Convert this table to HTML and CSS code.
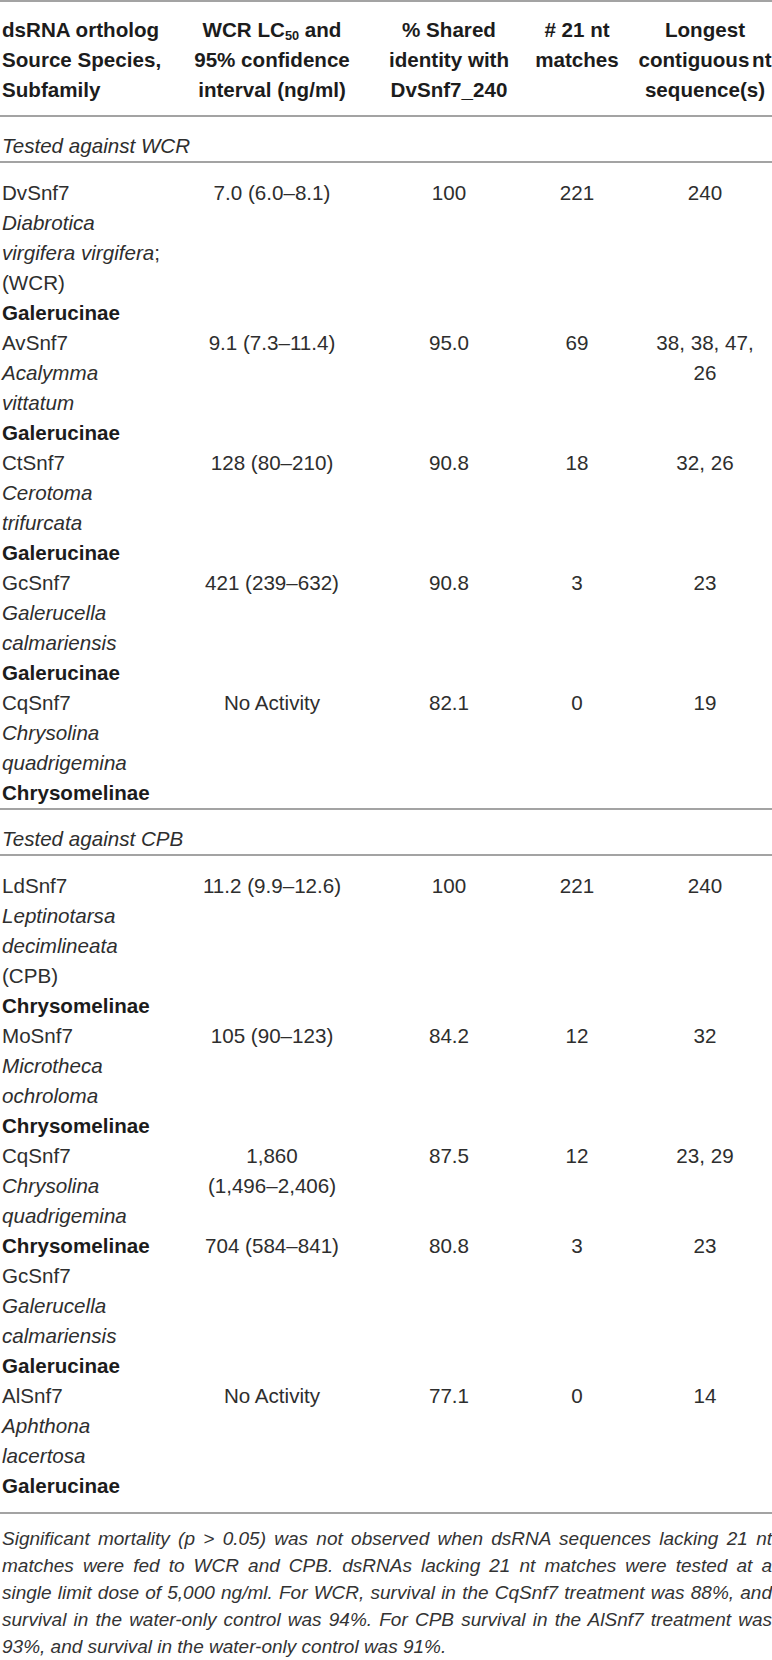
FILE: index.html
```html
<!DOCTYPE html>
<html lang="en">
<head>
<meta charset="utf-8">
<title>dsRNA orthologs</title>
<link rel="stylesheet" href="styles.css">
</head>
<body>
<table class="orthologs">
  <colgroup>
    <col class="c-src"><col class="c-lc"><col class="c-id"><col class="c-match"><col class="c-long">
  </colgroup>
  <thead>
    <tr>
      <th class="src">dsRNA ortholog<br>Source Species,<br>Subfamily</th>
      <th>WCR LC<sub>50</sub> and<br>95% confidence<br>interval (ng/ml)</th>
      <th>% Shared<br>identity with<br>DvSnf7_240</th>
      <th># 21 nt<br>matches</th>
      <th class="nowrap">Longest<br><span class="tight">contiguous nt</span><br>sequence(s)</th>
    </tr>
  </thead>
  <tbody class="group">
    <tr class="label"><td colspan="5">Tested against WCR</td></tr>
    <tr class="first">
      <td class="src"><span class="ln">DvSnf7</span><span class="ln sp">Diabrotica</span><span class="ln"><i>virgifera virgifera</i>;</span><span class="ln">(WCR)</span><span class="ln fam">Galerucinae</span></td>
      <td>7.0 (6.0–8.1)</td><td>100</td><td>221</td><td>240</td>
    </tr>
    <tr>
      <td class="src"><span class="ln">AvSnf7</span><span class="ln sp">Acalymma</span><span class="ln sp">vittatum</span><span class="ln fam">Galerucinae</span></td>
      <td>9.1 (7.3–11.4)</td><td>95.0</td><td>69</td><td>38, 38, 47,<br>26</td>
    </tr>
    <tr>
      <td class="src"><span class="ln">CtSnf7</span><span class="ln sp">Cerotoma</span><span class="ln sp">trifurcata</span><span class="ln fam">Galerucinae</span></td>
      <td>128 (80–210)</td><td>90.8</td><td>18</td><td>32, 26</td>
    </tr>
    <tr>
      <td class="src"><span class="ln">GcSnf7</span><span class="ln sp">Galerucella</span><span class="ln sp">calmariensis</span><span class="ln fam">Galerucinae</span></td>
      <td>421 (239–632)</td><td>90.8</td><td>3</td><td>23</td>
    </tr>
    <tr class="last">
      <td class="src"><span class="ln">CqSnf7</span><span class="ln sp">Chrysolina</span><span class="ln sp">quadrigemina</span><span class="ln fam">Chrysomelinae</span></td>
      <td>No Activity</td><td>82.1</td><td>0</td><td>19</td>
    </tr>
  </tbody>
  <tbody class="group final">
    <tr class="label"><td colspan="5">Tested against CPB</td></tr>
    <tr class="first">
      <td class="src"><span class="ln">LdSnf7</span><span class="ln sp">Leptinotarsa</span><span class="ln sp">decimlineata</span><span class="ln">(CPB)</span><span class="ln fam">Chrysomelinae</span></td>
      <td>11.2 (9.9–12.6)</td><td>100</td><td>221</td><td>240</td>
    </tr>
    <tr>
      <td class="src"><span class="ln">MoSnf7</span><span class="ln sp">Microtheca</span><span class="ln sp">ochroloma</span><span class="ln fam">Chrysomelinae</span></td>
      <td>105 (90–123)</td><td>84.2</td><td>12</td><td>32</td>
    </tr>
    <tr>
      <td class="src"><span class="ln">CqSnf7</span><span class="ln sp">Chrysolina</span><span class="ln sp">quadrigemina</span></td>
      <td>1,860<br>(1,496–2,406)</td><td>87.5</td><td>12</td><td>23, 29</td>
    </tr>
    <tr>
      <td class="src"><span class="ln fam">Chrysomelinae</span><span class="ln">GcSnf7</span><span class="ln sp">Galerucella</span><span class="ln sp">calmariensis</span><span class="ln fam">Galerucinae</span></td>
      <td>704 (584–841)</td><td>80.8</td><td>3</td><td>23</td>
    </tr>
    <tr class="last">
      <td class="src"><span class="ln">AlSnf7</span><span class="ln sp">Aphthona</span><span class="ln sp">lacertosa</span><span class="ln fam">Galerucinae</span></td>
      <td>No Activity</td><td>77.1</td><td>0</td><td>14</td>
    </tr>
  </tbody>
</table>
<p class="note">
  <span class="nl">Significant mortality (p &gt; 0.05) was not observed when dsRNA sequences lacking 21 nt</span>
  <span class="nl">matches were fed to WCR and CPB. dsRNAs lacking 21 nt matches were tested at a</span>
  <span class="nl">single limit dose of 5,000 ng/ml. For WCR, survival in the CqSnf7 treatment was 88%, and</span>
  <span class="nl">survival in the water-only control was 94%. For CPB survival in the AlSnf7 treatment was</span>
  <span class="nl end">93%, and survival in the water-only control was 91%.</span>
</p>
</body>
</html>
```
FILE: styles.css
```css
html, body {
  margin: 0;
  padding: 0;
  background: #ffffff;
}

body {
  width: 772px;
  font-family: "Liberation Sans", Arial, Helvetica, sans-serif;
  color: #2e2e2e;
}

.orthologs {
  width: 772px;
  table-layout: fixed;
  border-collapse: separate;
  border-spacing: 0;
  border-top: 2px solid #a3a3a3;
  border-bottom: 2px solid #a3a3a3;
  font-size: 20.6px;
  line-height: 30px;
}

.c-src { width: 162px; }
.c-lc { width: 220px; }
.c-id { width: 134px; }
.c-match { width: 122px; }
.c-long { width: 134px; }

.orthologs th {
  font-weight: bold;
  color: #1c1c1c;
  text-align: center;
  vertical-align: top;
  padding: 13px 0 10px;
  border-bottom: 2px solid #a3a3a3;
}

.orthologs th.src,
.orthologs td.src {
  text-align: left;
  padding-left: 2px;
}

.nowrap { white-space: nowrap; }
.tight { word-spacing: -3px; }

.orthologs sub {
  font-size: 0.62em;
  line-height: 0;
  vertical-align: -0.22em;
}

.orthologs td {
  padding: 0;
  text-align: center;
  vertical-align: top;
}

.orthologs .label td {
  text-align: left;
  font-style: italic;
  padding: 14px 0 0 2px;
  border-bottom: 2px solid #a3a3a3;
}

.orthologs .first td { padding-top: 15px; }

.group:not(.final) .last td { border-bottom: 2px solid #a3a3a3; }
.final .last td { padding-bottom: 11px; }

.ln { display: block; white-space: nowrap; }
.sp { font-style: italic; }
.fam { font-weight: bold; color: #1c1c1c; }

.note {
  margin: 0;
  padding: 11px 0 0 2px;
  width: 770px;
  font-size: 19px;
  line-height: 27px;
  font-style: italic;
  color: #333333;
}

.nl {
  display: block;
  white-space: nowrap;
  text-align: justify;
  text-align-last: justify;
}

.nl.end { text-align-last: left; }
```
